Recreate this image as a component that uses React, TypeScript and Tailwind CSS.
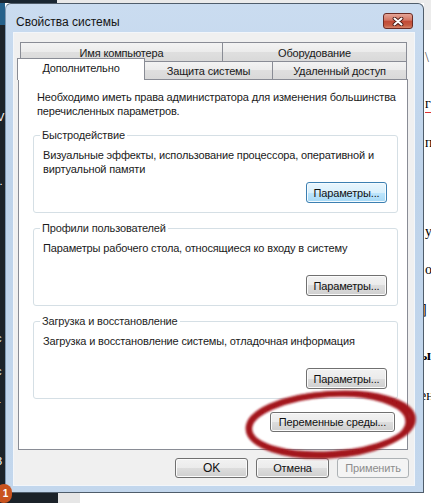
import type { ReactNode } from 'react'

// кнопки в стиле Windows 7
const baseBtn =
  'flex items-center justify-center rounded-[3px] border leading-[14px] whitespace-nowrap'
const normalBtn =
  'border-[#707070] bg-[linear-gradient(#f2f2f2,#ebebeb_50%,#dddddd_50%,#cfcfcf)] shadow-[inset_0_0_0_1px_#fbfbfb] text-[#111]'
const focusBtn =
  'border-[#3c7fb1] bg-[linear-gradient(#eaf6fd,#d9f0fc_50%,#bee6fd_50%,#a7d9f5)] shadow-[inset_0_0_0_1px_#f4fbff] text-[#111]'
const disabledBtn = 'border-[#adb2b5] bg-[#f4f4f4] text-[#8d8d8d]'

function Button({ children, className }: { children: ReactNode; className: string }) {
  return <div className={`${baseBtn} ${className}`}>{children}</div>
}

const tabBg = 'bg-[linear-gradient(#f3f3f3,#ebebeb_50%,#dfdfdf_50%,#d9d9d9)]'

function Group({ title, text, focused }: { title: string; text: ReactNode; focused?: boolean }) {
  return (
    <fieldset className="ml-[14px] mr-[9px] rounded-[3px] border border-[#d5dfe5] pb-[9px] pl-[9px] pr-[10px]">
      <legend className="-ml-[3px] px-[2px] leading-[14px] text-[#1e1e1e]">{title}</legend>
      <div className="mt-[6px] h-[28px] leading-[14px]">{text}</div>
      <div className="mt-[6px] flex justify-end">
        <Button className={`h-[21px] w-[81px] ${focused ? focusBtn : normalBtn}`}>Параметры...</Button>
      </div>
    </fieldset>
  )
}

function Window() {
  return (
    <div className="flex h-[490px] w-[419px] flex-col rounded-t-[6px] border border-[#4f5d6b] border-l-[#7e98b3] bg-[linear-gradient(180deg,#cadcf0,#bed3ea_35%,#c3d7ed)]">
      {/* заголовок */}
      <div className="flex h-[28px] items-start">
        <div className="pl-[10px] pt-[11px] text-[12px] leading-[14px] tracking-normal text-[#151515]">Свойства системы</div>
        <div className="ml-auto mr-[10px] mt-[9px] flex h-[16px] w-[30px] items-center justify-center rounded-[3px] border border-[#6b2b24] bg-[linear-gradient(#e6a597,#d27563_45%,#c24a36_50%,#c55a41_80%,#d5846a)]">
          <svg width="12" height="9" viewBox="0 0 12 9">
            <path d="M2.5 1.5 L9.5 7.5 M9.5 1.5 L2.5 7.5" stroke="#4a1a14" strokeWidth="3.8" strokeLinecap="round" />
            <path d="M2.5 1.5 L9.5 7.5 M9.5 1.5 L2.5 7.5" stroke="#ffffff" strokeWidth="2.1" strokeLinecap="round" />
          </svg>
        </div>
      </div>

      {/* клиентская область */}
      <div className="ml-[7px] mr-[8px] flex h-[454px] flex-col border border-[#f3f6fa] bg-[#f0f0f0] pl-[4px] pr-[6px] pt-[9px] tracking-[-0.15px]">
        {/* задний ряд вкладок */}
        <div className="ml-[2px] flex h-[19px]">
          <div className={`flex h-[19px] w-[203px] justify-center border border-b-0 border-[#898c95] pt-[3px] leading-[14px] ${tabBg}`}>
            Имя компьютера
          </div>
          <div className={`-ml-px flex h-[19px] w-[185px] justify-center border border-b-0 border-[#898c95] pt-[3px] leading-[14px] ${tabBg}`}>
            Оборудование
          </div>
        </div>
        {/* передний ряд */}
        <div className="flex h-[18px] items-end">
          <div className="relative z-10 -ml-px -mt-[3px] flex h-[22px] w-[128px] justify-center self-start border border-b-0 border-[#898c95] bg-white pt-[2px] leading-[14px]">
            Дополнительно
          </div>
          <div className={`-ml-px flex h-[18px] w-[129px] justify-center border border-b-0 border-[#898c95] pt-[2px] leading-[14px] ${tabBg}`}>
            Защита системы
          </div>
          <div className={`-ml-px flex h-[18px] w-[135px] justify-center border border-b-0 border-[#898c95] pt-[2px] leading-[14px] ${tabBg}`}>
            Удаленный доступ
          </div>
        </div>

        {/* панель */}
        <div className="flex h-[371px] flex-col border border-[#898c95] bg-white">
          <div className="pl-[18px] pt-[10px] leading-[14px]">
            Необходимо иметь права администратора для изменения большинства
            <br />
            перечисленных параметров.
          </div>
          <div className="mt-[10px] flex flex-col gap-[8px]">
            <Group
              title="Быстродействие"
              focused
              text={
                <>
                  Визуальные эффекты, использование процессора, оперативной и
                  <br />
                  виртуальной памяти
                </>
              }
            />
            <Group title="Профили пользователей" text="Параметры рабочего стола, относящиеся ко входу в систему" />
            <Group title="Загрузка и восстановление" text="Загрузка и восстановление системы, отладочная информация" />
          </div>
          <div className="mr-[12px] mt-[13px] flex justify-end">
            <Button className={`h-[20px] w-[125px] ${normalBtn}`}>Переменные среды...</Button>
          </div>
        </div>

        {/* нижние кнопки */}
        <div className="-mr-px mt-[8px] flex justify-end gap-[8px]">
          <Button className={`h-[20px] w-[73px] text-[12px] ${normalBtn}`}>OK</Button>
          <Button className={`h-[20px] w-[73px] ${normalBtn}`}>Отмена</Button>
          <Button className={`h-[20px] w-[72px] ${disabledBtn}`}>Применить</Button>
        </div>
      </div>
    </div>
  )
}

export default function App() {
  return (
    <div className="relative flex h-[503px] w-[431px] flex-col overflow-hidden bg-white font-['Liberation_Sans',Arial,sans-serif] text-[11px] text-[#1a1a1a]">
      <div className="flex h-[3px]">
        <div className="w-[57px] bg-[#1a2733]" />
        <div className="w-[143px] bg-[#e9e9e9]" />
        <div className="flex-1 bg-[#ececec]" />
      </div>

      <div className="flex h-[490px]">
        {/* рабочий стол слева */}
        <div className="flex w-[5px] flex-col overflow-hidden bg-[#1c232a] text-[11px] leading-[12px] text-white">
          <div className="h-[22px] bg-[#25618b]" />
          <div className="-ml-[3px] mt-[86px]">V</div>
          <div className="-ml-[3px] mt-[52px]">i.</div>
          <div className="-ml-[4px] mt-[145px]">c</div>
          <div className="-ml-[4px] mt-[21px]">c</div>
          <div className="-ml-[3px] mt-[21px]">r</div>
          <div className="-ml-[4px] mt-[45px]">3</div>
        </div>

        <Window />

        {/* документ справа */}
        <div className="flex w-[7px] flex-col overflow-hidden font-['Liberation_Serif',serif] text-[14px] leading-[16px] text-black">
          <div className="h-[27px] bg-[#ececec]" />
          <div className="ml-[1px] mt-[20px] text-[#555]">\</div>
          <div className="ml-[1px] mt-[30px] border-b border-dashed border-[#d33]">г</div>
          <div className="ml-[1px] mt-[22px]">п</div>
          <div className="ml-[1px] mt-[73px]">у</div>
          <div className="ml-[1px] mt-[22px]">о</div>
          <div className="-ml-[2px] mt-[24px]">]</div>
          <div className="-ml-[4px] mt-[30px] font-bold">ы</div>
          <div className="-ml-[4px] mt-[24px]">ен</div>
        </div>
      </div>

      <div className="flex h-[10px]">
        <div className="w-[58px] bg-[#1b2229]" />
        <div className="w-[22px] bg-[#e6e6e6]" />
        <div className="flex-1 bg-white" />
      </div>

      {/* значок уведомления */}
      <div className="absolute left-[-4px] top-[484px] flex h-[19px] w-[16px] items-center justify-center rounded-full bg-[#c9531f] pl-[3px] text-[10px] font-bold text-white">
        1
      </div>

      {/* красный овал */}
      <svg className="pointer-events-none absolute left-0 top-0" width="431" height="503">
        <defs>
          <filter id="soft" x="-10%" y="-10%" width="120%" height="120%">
            <feGaussianBlur stdDeviation="0.8" />
          </filter>
        </defs>
        <g filter="url(#soft)" fill="none" stroke="#a3121a">
          <ellipse cx="331" cy="424" rx="82" ry="30" transform="rotate(-4 331 424)" strokeWidth="6" />
          <ellipse cx="328" cy="425" rx="80" ry="31" transform="rotate(-3 328 425)" strokeWidth="5" />
        </g>
      </svg>
    </div>
  )
}
